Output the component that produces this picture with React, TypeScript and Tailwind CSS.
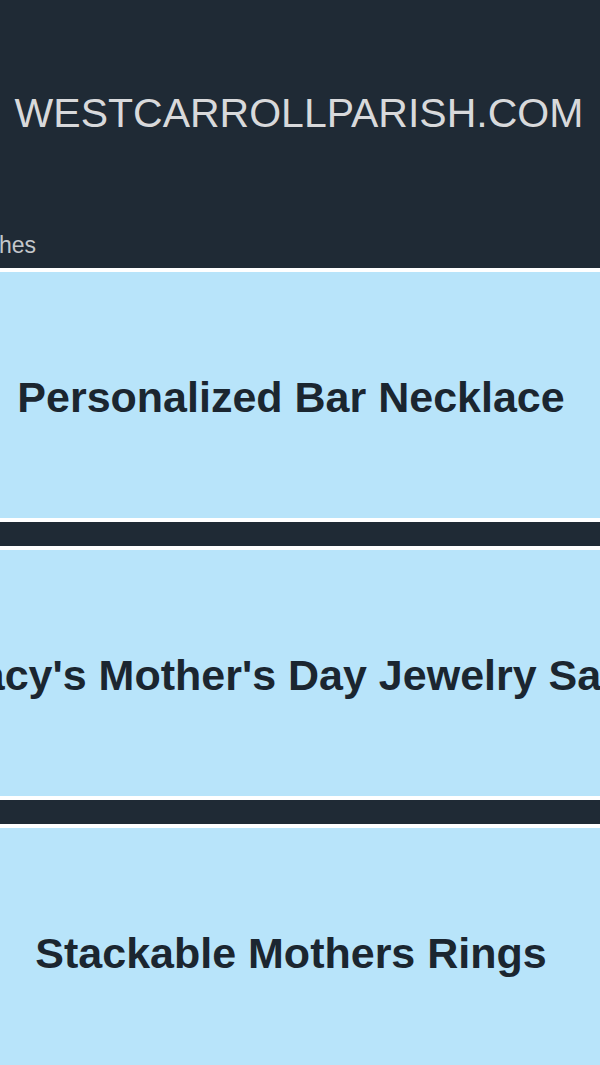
import React from "react";

const items = [
  "Personalized Bar Necklace",
  "Macy's Mother's Day Jewelry Sale",
  "Stackable Mothers Rings",
];

export default function App() {
  return (
    <div
      className="w-[600px] h-[1065px] overflow-hidden bg-[#1f2a35]"
      style={{ fontFamily: '"Liberation Sans", Arial, sans-serif' }}
    >
      <header className="h-[268px] flex flex-col">
        <div className="mt-[89px] h-[48px] leading-[48px] text-center text-[41px] text-[#d8d9db] whitespace-nowrap pr-[2px]">
          WESTCARROLLPARISH.COM
        </div>
        <div className="mt-[96px] h-[24px] w-[36px] flex justify-end">
          <span className="text-[23px] leading-[24px] text-[#c4c7cb] whitespace-nowrap">
            Related Searches
          </span>
        </div>
      </header>
      <div className="flex flex-col gap-[24px]">
        {items.map((t) => (
          <div
            key={t}
            className="h-[254px] border-y-4 border-white bg-[#b8e4fa] flex items-center justify-center overflow-hidden pr-[18px]"
          >
            <span className="text-[43px] font-bold text-[#1b2630] whitespace-nowrap leading-none pt-[4px]">
              {t}
            </span>
          </div>
        ))}
      </div>
    </div>
  );
}
